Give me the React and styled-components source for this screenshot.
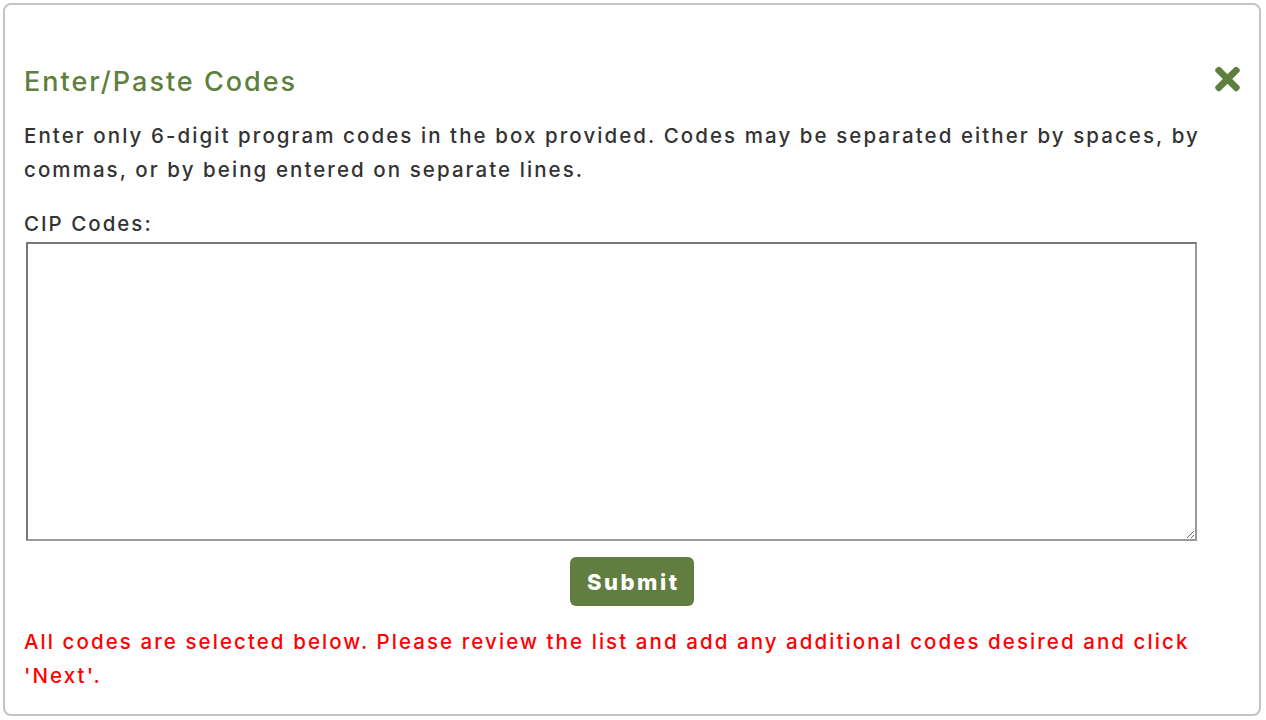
import React from 'react';
import styled, { createGlobalStyle } from 'styled-components';
import { FaTimes } from 'react-icons/fa';

const Global = createGlobalStyle`
  html, body { margin: 0; padding: 0; background: #fff; }
  body { font-family: Inter, "DejaVu Sans", sans-serif; color: #333; }
  * { box-sizing: border-box; }
`;

const Page = styled.div`
  padding: 3px 5px 4px 3px;
`;

const Modal = styled.div`
  height: 713px;
  border: 2px solid #c4c4c4;
  border-radius: 8px;
  padding: 0 19px 0 19px;
  display: flex;
  flex-direction: column;
`;

const Header = styled.div`
  margin-top: 60px;
  height: 34px;
  display: flex;
  align-items: flex-start;
  justify-content: space-between;
`;

const Title = styled.h2`
  margin: 0;
  font-size: 27px;
  font-weight: 500;
  letter-spacing: 2px;
  color: #5f7f3e;
  line-height: 34px;
`;

const CloseButton = styled.button`
  border: none;
  background: none;
  padding: 0;
  margin-top: -4px;
  color: #5f7f3e;
  display: flex;
  cursor: pointer;
`;

const CloseIcon = styled(FaTimes)`
  width: 25px;
  height: 36px;
`;

const Text = styled.p`
  margin: ${(p) => p.$mt || 0}px 0 0 0;
  font-size: 20.5px;
  font-weight: 500;
  letter-spacing: 2.07px;
  line-height: 34px;
  color: ${(p) => (p.$error ? '#ff0000' : '#333')};
`;

const Label = styled.label`
  display: block;
  margin-top: 20px;
  font-size: 20.5px;
  font-weight: 500;
  letter-spacing: 2px;
  line-height: 34px;
  color: #333;
`;

const CodesInput = styled.textarea`
  display: block;
  margin: 1px 0 0 2px;
  width: 1171px;
  height: 299px;
  border-style: solid;
  border-width: 2px;
  border-color: #777 #9a9a9a #9a9a9a #777;
  font-family: inherit;
  font-size: 16px;
  resize: both;
`;

const SubmitButton = styled.button`
  align-self: center;
  margin-top: 16px;
  width: 124px;
  height: 49px;
  padding: 0 0 0 2.5px;
  border: none;
  border-radius: 6px;
  background: #617d3f;
  color: #fff;
  font-family: inherit;
  font-size: 22px;
  font-weight: 800;
  letter-spacing: 2.5px;
  cursor: pointer;
`;

export default function App() {
  return (
    <>
      <Global />
      <Page>
        <Modal>
          <Header>
            <Title>Enter/Paste Codes</Title>
            <CloseButton aria-label="Close">
              <CloseIcon />
            </CloseButton>
          </Header>
          <Text $mt={20}>
            Enter only 6-digit program codes in the box provided. Codes may be separated either by spaces, by commas, or by being entered on separate lines.
          </Text>
          <Label htmlFor="cip">CIP Codes:</Label>
          <CodesInput id="cip" />
          <SubmitButton>Submit</SubmitButton>
          <Text $mt={19} $error>
            All codes are selected below. Please review the list and add any additional codes desired and click 'Next'.
          </Text>
        </Modal>
      </Page>
    </>
  );
}
